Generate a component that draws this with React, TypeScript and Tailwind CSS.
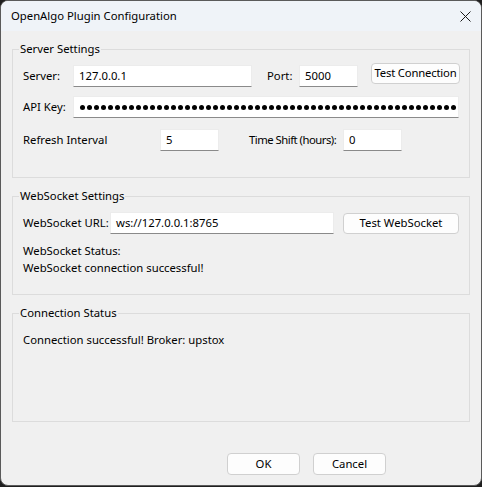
import React from "react";

// Windows-style dialog: OpenAlgo plugin configuration

const Field = ({ value, className = "" }: { value?: string; className?: string }) => (
  <div
    className={`h-[22px] bg-white border border-[#ececec] border-b-[#8a8a8a] flex items-center px-[5px] text-black ${className}`}
  >
    {value}
  </div>
);

const Btn = ({ label, className = "" }: { label: string; className?: string }) => (
  <div
    className={`bg-[#fdfdfd] border border-[#d0d0d0] rounded-[4px] flex items-center justify-center text-black ${className}`}
  >
    {label}
  </div>
);

const Group = ({ title, className = "", children }: { title: string; className?: string; children?: React.ReactNode }) => (
  <div className={`relative mx-[11px] border border-[#dcdcdc] ${className}`}>
    <span className="absolute -top-[9px] left-[6px] bg-[#f0f0f0] px-[1px] leading-[16px]">{title}</span>
    {children}
  </div>
);

export default function App() {
  return (
    <div className="w-[482px] h-[487px] bg-[#1f1f1f] font-['Noto_Sans',sans-serif] text-[11.3px] text-black whitespace-nowrap">
      <div className="w-[482px] h-[486px] bg-[#f0f0f0] border border-[#5a5a5a] rounded-[8px] overflow-hidden flex flex-col">
        {/* title bar */}
        <div className="h-[30px] bg-[#eff3f8] flex items-center justify-between pl-[10px] pr-[10px]">
          <span>OpenAlgo Plugin Configuration</span>
          <svg width="11" height="11" viewBox="0 0 11 11">
            <path d="M0.5 0.5 L10.5 10.5 M10.5 0.5 L0.5 10.5" stroke="#1a1a1a" strokeWidth="1" />
          </svg>
        </div>

        {/* Server Settings */}
        <Group title="Server Settings" className="mt-[18px] h-[129px]">
          <div className="flex items-start pl-[10px] mt-[13px]">
            <span className="w-[50px] h-[22px] mt-[2px] flex items-center">Server:</span>
            <Field value="127.0.0.1" className="w-[179px] mt-[2px]" />
            <span className="ml-[15px] w-[32px] h-[22px] mt-[2px] flex items-center">Port:</span>
            <Field value="5000" className="w-[59px] mt-[2px]" />
            <Btn label="Test Connection" className="ml-[13px] w-[89px] h-[21px] tracking-[-0.2px]" />
          </div>
          <div className="flex items-center pl-[10px] mt-[9px]">
            <span className="w-[50px]">API Key:</span>
            <div className="w-[386px] h-[22px] bg-white border border-[#ececec] border-b-[#8a8a8a] flex items-center pl-[6px] gap-[2px]">
              {Array.from({ length: 54 }).map((_, i) => (
                <span key={i} className="w-[5px] h-[5px] rounded-full bg-black shrink-0" />
              ))}
            </div>
          </div>
          <div className="flex items-center pl-[10px] mt-[11px]">
            <span className="w-[137px]">Refresh Interval</span>
            <Field value="5" className="w-[59px]" />
            <span className="ml-[30px] w-[94px] tracking-[-0.5px]">Time Shift (hours):</span>
            <Field value="0" className="w-[59px]" />
          </div>
        </Group>

        {/* WebSocket Settings */}
        <Group title="WebSocket Settings" className="mt-[18px] h-[99px]">
          <div className="flex items-center pl-[10px] mt-[15px]">
            <span className="w-[87px]">WebSocket URL:</span>
            <Field value="ws://127.0.0.1:8765" className="w-[224px]" />
            <Btn label="Test WebSocket" className="ml-[9px] w-[116px] h-[21px] border-[#1f6fc5]" />
          </div>
          <div className="pl-[10px] mt-[8px] leading-[17px]">
            <p>WebSocket Status:</p>
            <p>WebSocket connection successful!</p>
          </div>
        </Group>

        {/* Connection Status */}
        <Group title="Connection Status" className="mt-[18px] h-[109px]">
          <p className="pl-[10px] mt-[17px] leading-[17px]">Connection successful! Broker: upstox</p>
        </Group>

        {/* dialog buttons */}
        <div className="flex justify-end gap-[13px] pr-[95px] mt-[31px]">
          <Btn label="OK" className="w-[73px] h-[22px]" />
          <Btn label="Cancel" className="w-[73px] h-[22px]" />
        </div>
      </div>
    </div>
  );
}
